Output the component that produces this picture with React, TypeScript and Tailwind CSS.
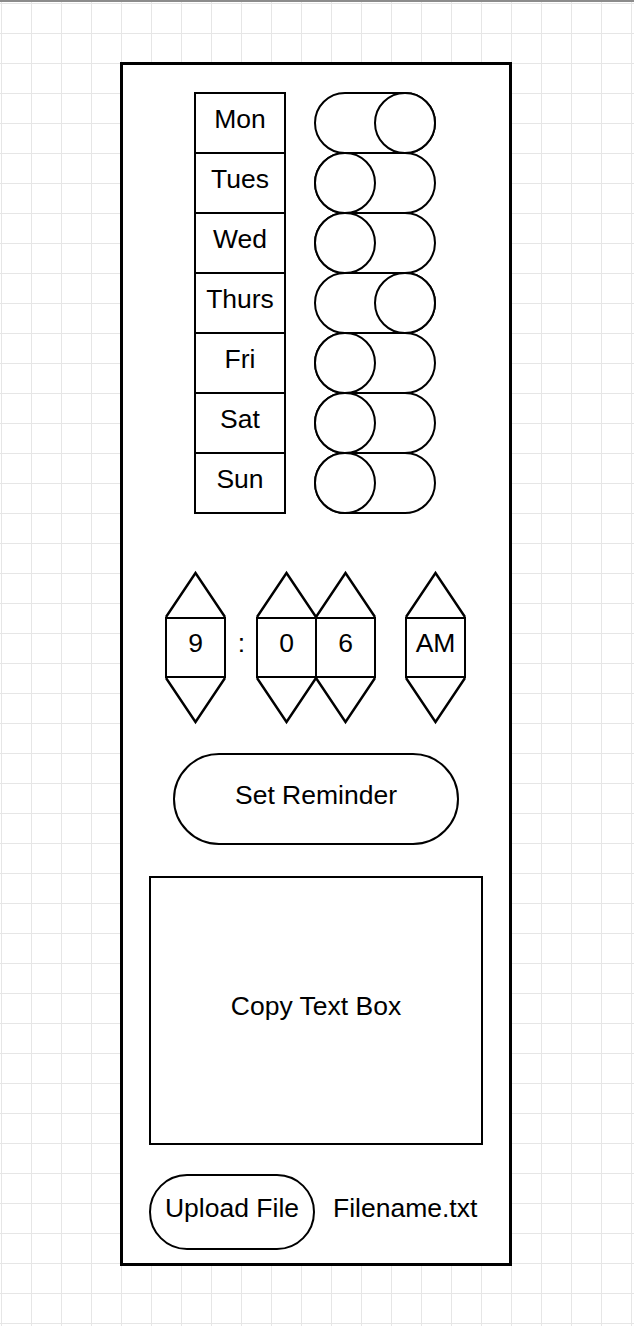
import React from "react";

const days: { name: string; on: boolean }[] = [
  { name: "Mon", on: true },
  { name: "Tues", on: false },
  { name: "Wed", on: false },
  { name: "Thurs", on: true },
  { name: "Fri", on: false },
  { name: "Sat", on: false },
  { name: "Sun", on: false },
];

function Picker({ value, className = "" }: { value: string; className?: string }) {
  return (
    <div className={"flex w-[61px] flex-col " + className}>
      <svg width="61" height="45" viewBox="0 0 61 45" className="block overflow-visible">
        <polyline points="1,45 30.5,1 60,45" fill="none" stroke="#000" strokeWidth="2.4" strokeLinejoin="miter" />
      </svg>
      <div className="flex h-[61px] w-[61px] items-center justify-center border-2 border-black pb-[7px]">
        {value}
      </div>
      <svg width="61" height="45" viewBox="0 0 61 45" className="block overflow-visible">
        <polyline points="1,0 30.5,44 60,0" fill="none" stroke="#000" strokeWidth="2.4" strokeLinejoin="miter" />
      </svg>
    </div>
  );
}

export default function App() {
  return (
    <div className="relative h-[1326px] w-full overflow-hidden bg-white font-['Liberation_Sans',Arial,sans-serif] text-[26.5px] text-black [background-image:linear-gradient(to_right,#e6e6e6_1px,transparent_1px),linear-gradient(to_bottom,#e6e6e6_1px,transparent_1px)] [background-position:1px_3px] [background-size:30px_30px]">
      <div className="h-[2px] w-full bg-[#8c8c8c]" />
      <div className="ml-[120px] mt-[60px] flex h-[1204px] w-[392px] flex-col border-[3px] border-black bg-white">
        {/* Days + toggles */}
        <div className="ml-[71px] mt-[27px] flex gap-[28px]">
          <div className="flex flex-col">
            {days.map((d, i) => (
              <div
                key={d.name}
                className={
                  "flex h-[62px] w-[92px] items-center justify-center border-2 border-black pb-[7px] " +
                  (i > 0 ? "-mt-[2px]" : "")
                }
              >
                {d.name}
              </div>
            ))}
          </div>
          <div className="flex flex-col">
            {days.map((d, i) => (
              <div
                key={d.name}
                className={
                  "flex h-[62px] w-[122px] rounded-full border-2 border-black " +
                  (d.on ? "justify-end " : "justify-start ") +
                  (i > 0 ? "-mt-[2px]" : "")
                }
              >
                <div className="-m-[2px] h-[62px] w-[62px] shrink-0 rounded-full border-2 border-black bg-white" />
              </div>
            ))}
          </div>
        </div>

        {/* Time picker */}
        <div className="ml-[42px] mt-[58px] flex items-start">
          <Picker value="9" />
          <div className="flex h-[151px] w-[30px] items-center justify-center pb-[7px] pl-[1px]">:</div>
          <Picker value="0" />
          <Picker value="6" className="-ml-[2px]" />
          <div className="w-[29px]" />
          <Picker value="AM" />
        </div>

        {/* Set Reminder */}
        <div className="ml-[50px] mt-[30px] flex h-[92px] w-[286px] items-center justify-center rounded-full border-2 border-black pb-[7px]">
          Set Reminder
        </div>

        {/* Copy Text Box */}
        <div className="ml-[26px] mt-[31px] flex h-[269px] w-[334px] items-center justify-center border-2 border-black pb-[7px]">
          Copy Text Box
        </div>

        {/* Upload */}
        <div className="ml-[26px] mt-[29px] flex items-center">
          <div className="flex h-[76px] w-[166px] items-center justify-center rounded-full border-2 border-black pb-[7px]">
            Upload File
          </div>
          <div className="ml-[18px] pb-[7px]">Filename.txt</div>
        </div>
      </div>
    </div>
  );
}
